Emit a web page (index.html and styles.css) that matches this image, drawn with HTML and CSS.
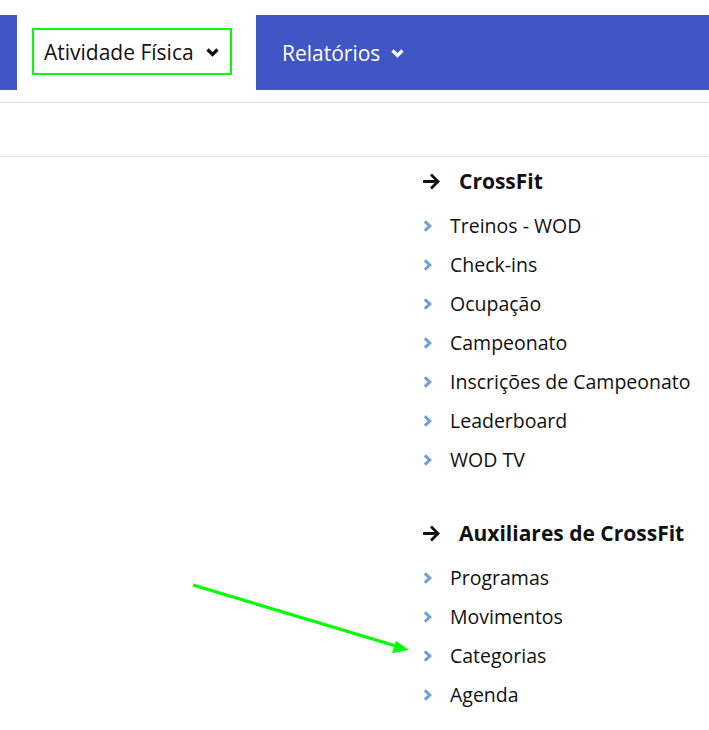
FILE: index.html
```html
<!DOCTYPE html>
<html lang="pt">
<head>
<meta charset="utf-8">
<link rel="stylesheet" href="styles.css">
</head>
<body>
<header class="topbar">
  <div class="stub"></div>
  <div class="gapcell">
    <div class="active-item">
      <span>Atividade Física</span>
      <svg class="chev" viewBox="0 0 13 9" width="13" height="9"><path d="M1.5 1.5 L6.5 6.5 L11.5 1.5" fill="none" stroke="currentColor" stroke-width="3.2"/></svg>
    </div>
  </div>
  <nav class="navbar">
    <span>Relatórios</span>
    <svg class="chev" viewBox="0 0 13 9" width="13" height="9"><path d="M1.5 1.5 L6.5 6.5 L11.5 1.5" fill="none" stroke="currentColor" stroke-width="3.2"/></svg>
  </nav>
</header>
<div class="band"></div>
<main class="content">
  <section class="menu">
    <div class="group">
      <h3 class="heading"><svg class="arrow" viewBox="0 0 18 17" width="18" height="17"><path d="M1 8.5 H16 M9 1.5 L16 8.5 L9 15.5" fill="none" stroke="currentColor" stroke-width="2.8"/></svg>CrossFit</h3>
      <ul>
        <li><svg class="bullet" viewBox="0 0 9 12" width="9" height="12"><path d="M1.8 1.3 L6.8 6 L1.8 10.7" fill="none" stroke="#6ea0d3" stroke-width="3"/></svg>Treinos - WOD</li>
        <li><svg class="bullet" viewBox="0 0 9 12" width="9" height="12"><path d="M1.8 1.3 L6.8 6 L1.8 10.7" fill="none" stroke="#6ea0d3" stroke-width="3"/></svg>Check-ins</li>
        <li><svg class="bullet" viewBox="0 0 9 12" width="9" height="12"><path d="M1.8 1.3 L6.8 6 L1.8 10.7" fill="none" stroke="#6ea0d3" stroke-width="3"/></svg>Ocupação</li>
        <li><svg class="bullet" viewBox="0 0 9 12" width="9" height="12"><path d="M1.8 1.3 L6.8 6 L1.8 10.7" fill="none" stroke="#6ea0d3" stroke-width="3"/></svg>Campeonato</li>
        <li><svg class="bullet" viewBox="0 0 9 12" width="9" height="12"><path d="M1.8 1.3 L6.8 6 L1.8 10.7" fill="none" stroke="#6ea0d3" stroke-width="3"/></svg>Inscrições de Campeonato</li>
        <li><svg class="bullet" viewBox="0 0 9 12" width="9" height="12"><path d="M1.8 1.3 L6.8 6 L1.8 10.7" fill="none" stroke="#6ea0d3" stroke-width="3"/></svg>Leaderboard</li>
        <li><svg class="bullet" viewBox="0 0 9 12" width="9" height="12"><path d="M1.8 1.3 L6.8 6 L1.8 10.7" fill="none" stroke="#6ea0d3" stroke-width="3"/></svg>WOD TV</li>
      </ul>
    </div>
    <div class="group">
      <h3 class="heading"><svg class="arrow" viewBox="0 0 18 17" width="18" height="17"><path d="M1 8.5 H16 M9 1.5 L16 8.5 L9 15.5" fill="none" stroke="currentColor" stroke-width="2.8"/></svg>Auxiliares de CrossFit</h3>
      <ul>
        <li><svg class="bullet" viewBox="0 0 9 12" width="9" height="12"><path d="M1.8 1.3 L6.8 6 L1.8 10.7" fill="none" stroke="#6ea0d3" stroke-width="3"/></svg>Programas</li>
        <li><svg class="bullet" viewBox="0 0 9 12" width="9" height="12"><path d="M1.8 1.3 L6.8 6 L1.8 10.7" fill="none" stroke="#6ea0d3" stroke-width="3"/></svg>Movimentos</li>
        <li><svg class="bullet" viewBox="0 0 9 12" width="9" height="12"><path d="M1.8 1.3 L6.8 6 L1.8 10.7" fill="none" stroke="#6ea0d3" stroke-width="3"/></svg>Categorias</li>
        <li><svg class="bullet" viewBox="0 0 9 12" width="9" height="12"><path d="M1.8 1.3 L6.8 6 L1.8 10.7" fill="none" stroke="#6ea0d3" stroke-width="3"/></svg>Agenda</li>
      </ul>
    </div>
  </section>
</main>
<svg class="annot" width="709" height="730" viewBox="0 0 709 730">
  <line x1="193" y1="585" x2="396" y2="646" stroke="#00ff00" stroke-width="3"/>
  <polygon points="409,650 392,653 396,641" fill="#00ff00"/>
</svg>
</body>
</html>
```

FILE: styles.css
```css
* { box-sizing: border-box; }
html, body { margin: 0; padding: 0; background: #fff; }
body {
  font-family: "Open Sans", "Noto Sans", sans-serif;
  color: #111;
  width: 709px;
  height: 730px;
  overflow: hidden;
  position: relative;
}
.topbar {
  display: flex;
  margin-top: 15px;
  height: 75px;
}
.stub { width: 17px; background: #3f56c4; }
.gapcell {
  width: 239px;
  padding: 13px 0 0 15px;
}
.active-item {
  width: 200px;
  height: 47px;
  border: 2px solid #00ff00;
  display: flex;
  align-items: center;
  padding-left: 10px;
  font-size: 21px;
  color: #111;
}
.active-item .chev { margin-left: 12px; margin-top: 1px; color: #111; }
.navbar {
  flex: 1;
  background: #3f56c4;
  color: #fff;
  display: flex;
  align-items: center;
  padding-left: 26px;
  font-size: 21px;
}
.navbar .chev { margin-left: 11px; margin-top: 1px; }
.band {
  margin-top: 12px;
  height: 55px;
  border-top: 1px solid #e2e2e2;
  border-bottom: 1px solid #e2e2e2;
}
.content { padding-left: 422px; }
.menu { display: flex; flex-direction: column; gap: 40px; padding-top: 10px; }
.heading {
  margin: 0;
  display: flex;
  align-items: center;
  font-size: 21px;
  font-weight: 700;
  height: 28px;
}
.heading .arrow { margin-right: 19px; margin-top: 1px; }
ul { list-style: none; margin: 0; padding: 0; margin-top: 11px; }
li {
  display: flex;
  align-items: center;
  height: 39px;
  font-size: 19.5px;
  color: #111;
}
li .bullet { margin-left: 1px; margin-right: 18px; margin-top: 1px; }
.annot { position: absolute; left: 0; top: 0; pointer-events: none; }
```
